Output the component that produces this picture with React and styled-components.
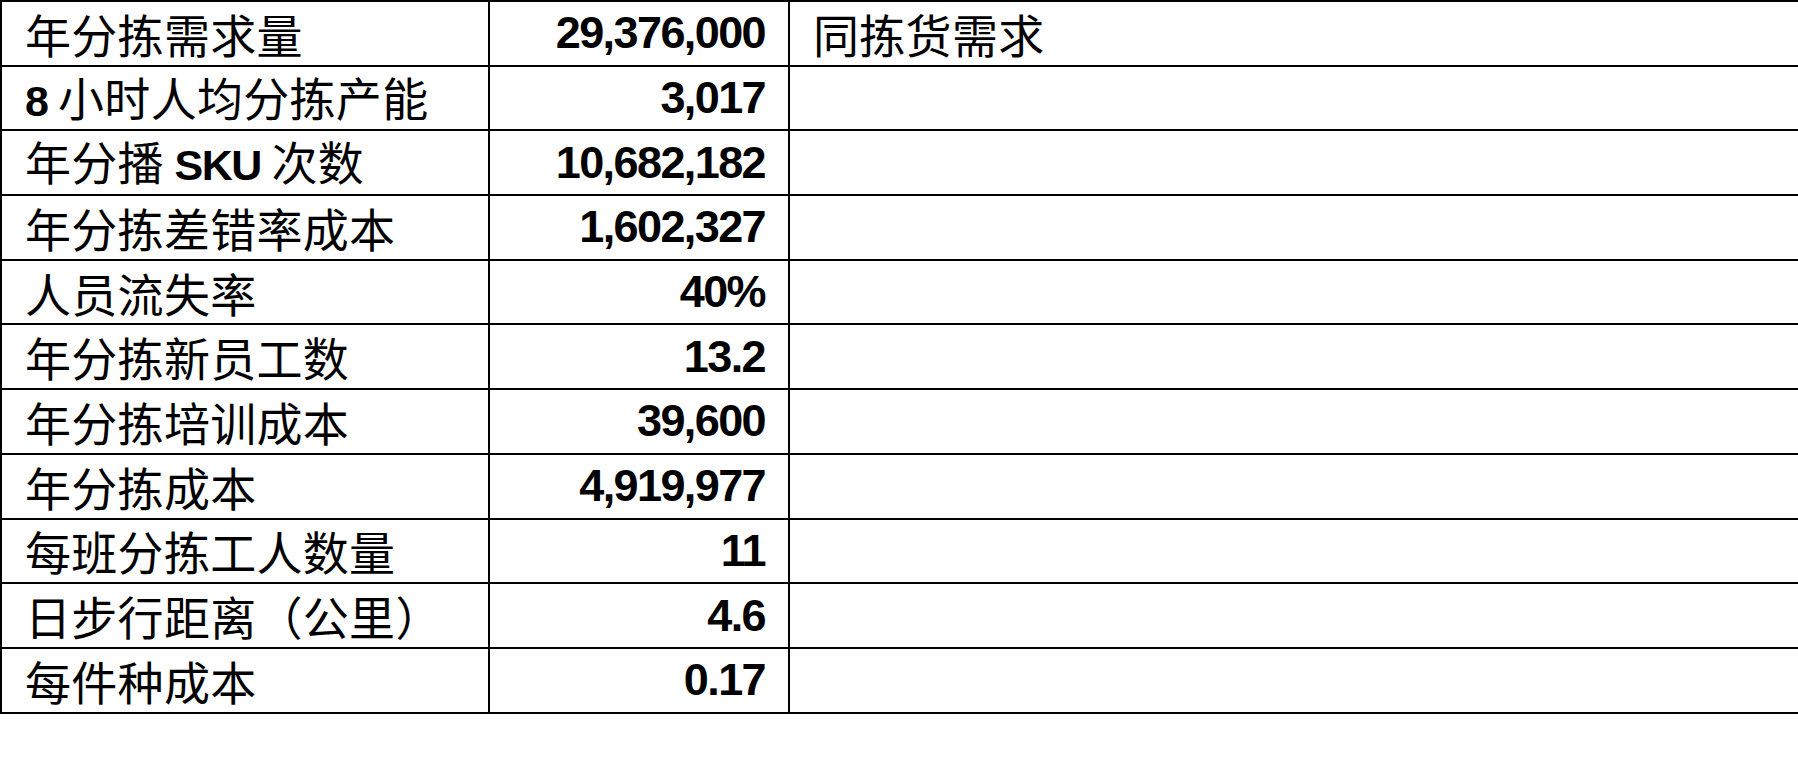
import React from "react";
import styled, { createGlobalStyle } from "styled-components";

//
// page reset
const GlobalStyle = createGlobalStyle`
  html, body {
    margin: 0;
    padding: 0;
    background: #ffffff;
  }
  body {
    width: 1798px;
    height: 774px;
    overflow: hidden;
  }
`;

//
const Sheet = styled.div`
  width: 1798px;
  height: 774px;
  background: #ffffff;
`;

// the table, top + left border here, each cell draws right + bottom
const Table = styled.div`
  display: grid;
  grid-template-columns: 488px 300px 1012px;
  grid-auto-rows: 64.7px;
  border-top: 2px solid #000;
  border-left: 2px solid #000;
  width: 1800px;
  box-sizing: border-box;
`;

const Cell = styled.div`
  box-sizing: border-box;
  border-right: 2px solid #000;
  border-bottom: 2px solid #000;
  display: flex;
  align-items: center;
  justify-content: ${(props) => (props.align === "right" ? "flex-end" : "flex-start")};
  padding: ${(props) => (props.align === "right" ? "0 23px 0 0" : "0 0 0 23px")};
  color: #000;
  white-space: nowrap;
`;

// chinese labels
const Label = styled.span`
  font-family: "Noto Sans CJK SC", "Liberation Sans", sans-serif;
  font-size: 46px;
  font-weight: 400;
  line-height: 1.2;
  letter-spacing: 0.3px;
`;

// latin bits inside a label (8, SKU)
const Latin = styled.span`
  font-family: "Liberation Sans", sans-serif;
  font-weight: 700;
  font-size: 43px;
  letter-spacing: -1.5px;
`;

// the numbers, squeezed a bit to get the narrow look
const Value = styled.span`
  font-family: "Liberation Sans", sans-serif;
  font-size: 45px;
  font-weight: 700;
  line-height: 1.2;
  letter-spacing: -1.6px;
`;

const rows = [
  { label: "年分拣需求量", value: "29,376,000", note: "同拣货需求" },
  { label: [<Latin key="a">8</Latin>, " 小时人均分拣产能"], value: "3,017" },
  { label: ["年分播 ", <Latin key="b">SKU</Latin>, " 次数"], value: "10,682,182" },
  { label: "年分拣差错率成本", value: "1,602,327" },
  { label: "人员流失率", value: "40%" },
  { label: "年分拣新员工数", value: "13.2" },
  { label: "年分拣培训成本", value: "39,600" },
  { label: "年分拣成本", value: "4,919,977" },
  { label: "每班分拣工人数量", value: "11" },
  { label: "日步行距离（公里）", value: "4.6" },
  { label: "每件种成本", value: "0.17" },
];

const App = () => {
  return (
    <Sheet>
      <GlobalStyle />
      <Table>
        {rows.map((row, i) => (
          <React.Fragment key={i}>
            <Cell>
              <Label>{row.label}</Label>
            </Cell>
            <Cell align="right">
              <Value>{row.value}</Value>
            </Cell>
            <Cell>{row.note && <Label>{row.note}</Label>}</Cell>
          </React.Fragment>
        ))}
      </Table>
    </Sheet>
  );
};

export default App;
